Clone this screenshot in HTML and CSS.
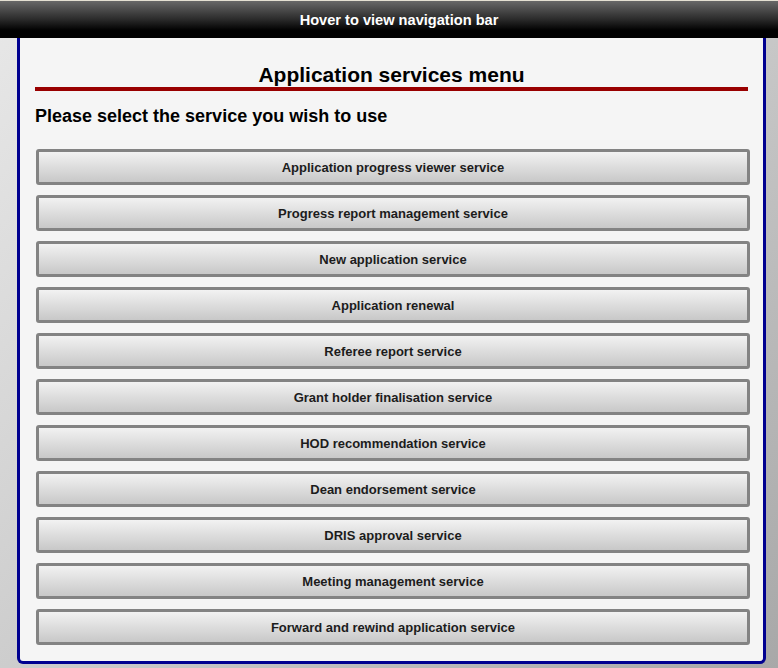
FILE: index.html
```html
<!DOCTYPE html>
<html>
<head>
<meta charset="utf-8">
<title>Application services menu</title>
<link rel="stylesheet" href="styles.css">
</head>
<body>
<div class="topbar">Hover to view navigation bar</div>
<div class="panel">
  <h1 class="title">Application services menu</h1>
  <h2 class="subtitle">Please select the service you wish to use</h2>
  <div class="menu">
    <button class="svc">Application progress viewer service</button>
    <button class="svc">Progress report management service</button>
    <button class="svc">New application service</button>
    <button class="svc">Application renewal</button>
    <button class="svc">Referee report service</button>
    <button class="svc">Grant holder finalisation service</button>
    <button class="svc">HOD recommendation service</button>
    <button class="svc">Dean endorsement service</button>
    <button class="svc">DRIS approval service</button>
    <button class="svc">Meeting management service</button>
    <button class="svc">Forward and rewind application service</button>
  </div>
</div>
</body>
</html>
```
FILE: styles.css
```css
html, body {
  margin: 0;
  padding: 0;
  height: 100%;
}
body {
  background: linear-gradient(135deg, #e8e8e8 0%, #c8c8c8 55%, #a8a8a8 100%);
  font-family: "Liberation Sans", Arial, sans-serif;
  overflow: hidden;
}
.topbar {
  height: 37px;
  border-top: 1px solid #e4e0d2;
  background: linear-gradient(#686868 0%, #2a2a2a 50%, #000 80%, #000 100%);
  color: #fff;
  font-weight: bold;
  font-size: 14.6px;
  line-height: 38px;
  text-align: center;
  padding-left: 20px;
}
.panel {
  margin-left: 17px;
  width: 713px;
  background: #f5f5f5;
  border: 3px solid #000090;
  border-top: none;
  border-radius: 0 0 6px 6px;
  padding: 25px 15px 16px 15px;
}
.title {
  margin: 0;
  font-size: 21px;
  line-height: 24px;
  font-weight: bold;
  text-align: center;
  color: #000;
  border-bottom: 4px solid #990000;
}
.subtitle {
  margin: 14px 0 0 0;
  font-size: 18px;
  line-height: 22px;
  font-weight: bold;
  color: #000;
}
.menu {
  display: flex;
  flex-direction: column;
  gap: 10px;
  margin-top: 22px;
  margin-left: 1px;
}
.svc {
  width: 714px;
  height: 36px;
  border: 3px solid #838383;
  border-radius: 3px;
  background: linear-gradient(#f2f2f2, #c8c8c8);
  font-family: "Liberation Sans", Arial, sans-serif;
  font-weight: bold;
  font-size: 13px;
  color: #1c1c1c;
  padding: 0;
  margin: 0;
  text-align: center;
}
```
